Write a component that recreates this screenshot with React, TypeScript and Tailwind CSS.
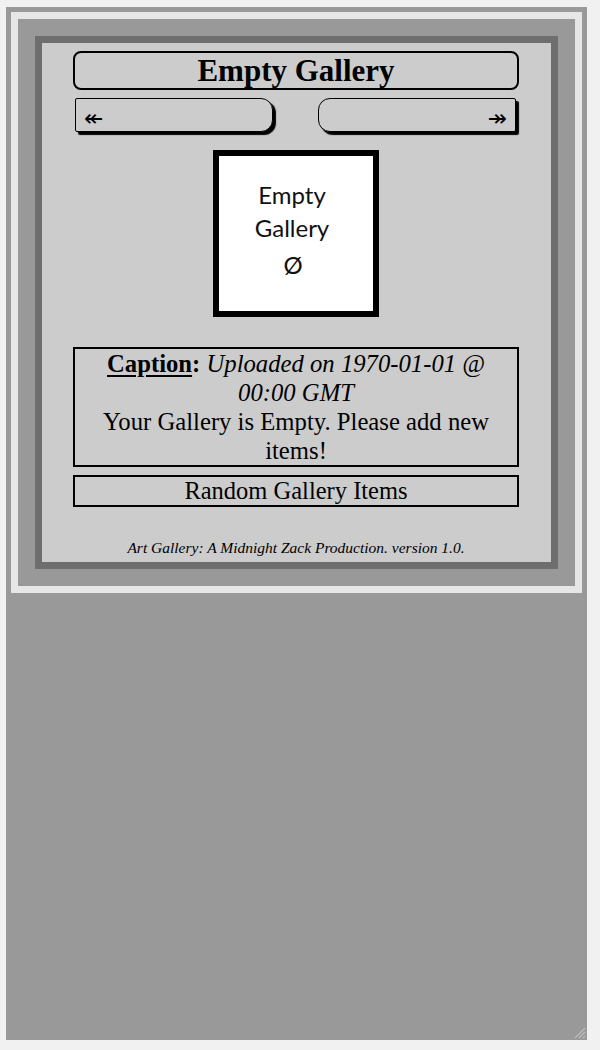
const serif = { fontFamily: '"Liberation Serif", "Times New Roman", serif' };

const NavButton = ({ dir }: { dir: "prev" | "next" }) => {
  const prev = dir === "prev";
  return (
    <button
      className={
        "h-[34px] w-[198px] border-[1.5px] border-black bg-[#cccccc] shadow-[3px_3px_1px_#000] flex items-center px-[8px] pt-[6px] text-[23px] leading-none text-black " +
        (prev
          ? "rounded-r-[12px] rounded-l-[2px] justify-start"
          : "rounded-l-[12px] rounded-r-[2px] justify-end")
      }
      style={{ fontFamily: '"DejaVu Sans", sans-serif' }}
    >
      {prev ? "↞" : "↠"}
    </button>
  );
};

export default function App() {
  return (
    <div className="min-h-[1050px] bg-[#f1f1f1] pt-[7px] pl-[6px]" style={serif}>
      <div className="relative h-[1033px] w-[581px] bg-[#999999] p-[5px]">
        <div className="border-[7px] border-[#e6e6e6] bg-[#999999] p-[17px]">
          <div className="border-[7px] border-[#6e6e6e] bg-[#cccccc] pl-[31px] pr-[32px] pt-[8px] pb-[5px] text-black">
            <div className="rounded-[8px] border-2 border-black text-center text-[31px] font-bold leading-[35px]">
              Empty Gallery
            </div>

            <div className="mt-[8px] flex justify-between pl-[2px] pr-[3px]">
              <NavButton dir="prev" />
              <NavButton dir="next" />
            </div>

            <div className="mt-[18px] flex justify-center">
              <div
                className="flex h-[167px] w-[166px] flex-col items-center border-[6px] border-black bg-white pr-[8px] pt-[22px] text-[24px] leading-[33px] text-[#111]"
                style={{ fontFamily: 'Lato, "Open Sans", sans-serif' }}
              >
                <span>Empty</span>
                <span>Gallery</span>
                <span className="mt-[4px] pl-[2px]">Ø</span>
              </div>
            </div>

            <div className="mt-[30px] border-2 border-black px-[6px] text-center text-[24.7px] leading-[29px]">
              <span className="font-bold">
                <span className="underline decoration-2 underline-offset-[3px]">Caption</span>:
              </span>{" "}
              <em>Uploaded on 1970-01-01 @ 00:00 GMT</em>
              <br />
              Your Gallery is Empty. Please add new items!
            </div>

            <div className="mt-[8px] border-2 border-black text-center text-[24.5px] leading-[28px]">
              Random Gallery Items
            </div>

            <p className="mt-[32px] text-center text-[15.5px] italic leading-[18px]">
              Art Gallery: A Midnight Zack Production. version 1.0.
            </p>
          </div>
        </div>

        <svg
          className="absolute bottom-[1px] right-[1px]"
          width="14"
          height="14"
          viewBox="0 0 14 14"
        >
          <path d="M13 3 L3 13 M13 7 L7 13 M13 11 L11 13" stroke="#bdbdbd" strokeWidth="1.2" />
        </svg>
      </div>
    </div>
  );
}
